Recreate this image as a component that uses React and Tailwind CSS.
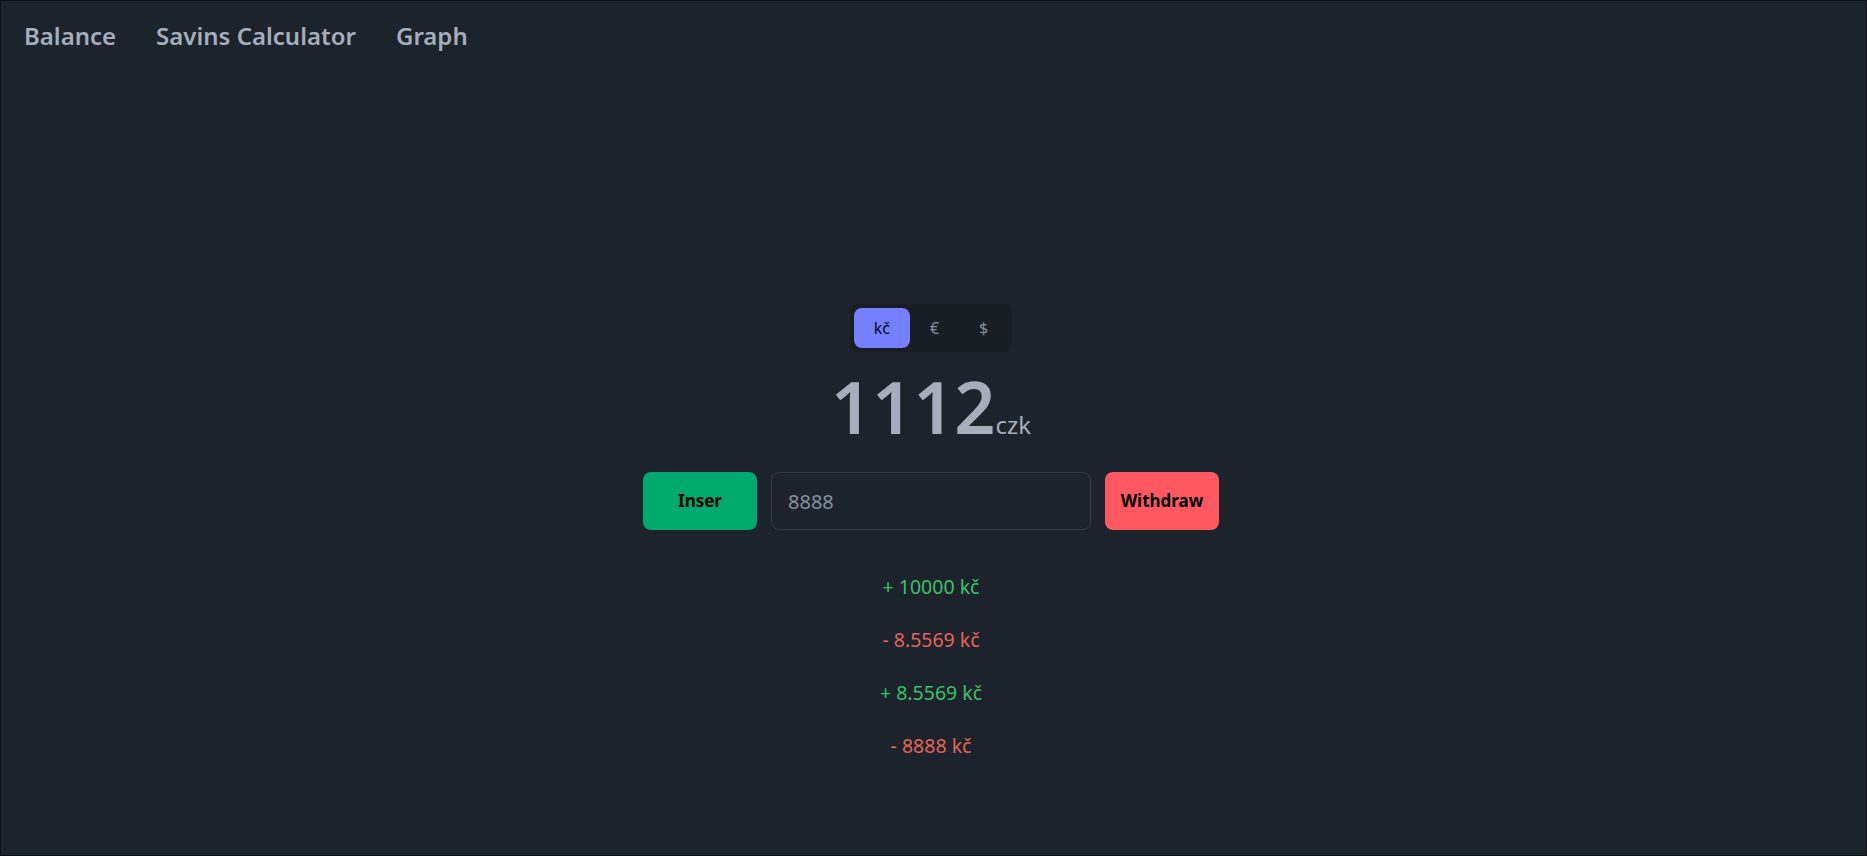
import React, { useState } from "react";

const currencies = [
  { key: "czk", label: "kč" },
  { key: "eur", label: "€" },
  { key: "usd", label: "$" },
];

const history = [
  { type: "in", amount: "10000" },
  { type: "out", amount: "8.5569" },
  { type: "in", amount: "8.5569" },
  { type: "out", amount: "8888" },
];

const App = () => {
  const [currency, setCurrency] = useState("czk");
  const [amount, setAmount] = useState("8888");

  return (
    <div
      className="h-[856px] w-full bg-[#1d232a] border border-[#0e1115] flex flex-col text-[#a6adbb]"
      style={{ fontFamily: '"Noto Sans", "Open Sans", sans-serif' }}
    >
      <nav className="flex items-center gap-[40px] pl-[23px] pt-[19px]">
        <a className="text-2xl font-semibold leading-8 cursor-pointer">Balance</a>
        <a className="text-2xl font-semibold leading-8 cursor-pointer">Savins Calculator</a>
        <a className="text-2xl font-semibold leading-8 cursor-pointer">Graph</a>
      </nav>

      <main className="flex flex-col items-center mt-[252px] pr-[5px]">
        <div className="flex p-1 rounded-lg bg-[#191e24]">
          {currencies.map((c) => (
            <button
              key={c.key}
              onClick={() => setCurrency(c.key)}
              className={`h-10 px-5 rounded-lg text-base ${
                currency === c.key ? "bg-[#7480ff] text-[#050617]" : "text-[#a6adbb]/80"
              }`}
            >
              {c.label}
            </button>
          ))}
        </div>

        <div className="mt-[18px] flex items-baseline">
          <span className="text-7xl font-semibold leading-none">1112</span>
          <span className="text-2xl">czk</span>
        </div>

        <div className="mt-[30px] flex items-center gap-[14px]">
          <button className="h-[58px] w-[114px] rounded-lg bg-[#00a96e] text-black text-[17px] font-bold">
            Inser
          </button>
          <input
            value={amount}
            onChange={(e) => setAmount(e.target.value)}
            className="h-[58px] w-[320px] rounded-lg bg-[#1d232a] border border-[#343b45] px-4 text-xl text-[#a6adbb]/80 outline-none"
          />
          <button className="h-[58px] w-[114px] rounded-lg bg-[#ff5861] text-black text-[17px] font-bold">
            Withdraw
          </button>
        </div>

        <ul className="mt-[43px] flex flex-col items-center gap-[25px]">
          {history.map((h, i) => (
            <li
              key={i}
              className={`text-[19.5px] leading-7 ${h.type === "in" ? "text-[#36c26b]" : "text-[#e5625e]"}`}
            >
              {h.type === "in" ? "+" : "-"} {h.amount} kč
            </li>
          ))}
        </ul>
      </main>
    </div>
  );
};

export default App;
